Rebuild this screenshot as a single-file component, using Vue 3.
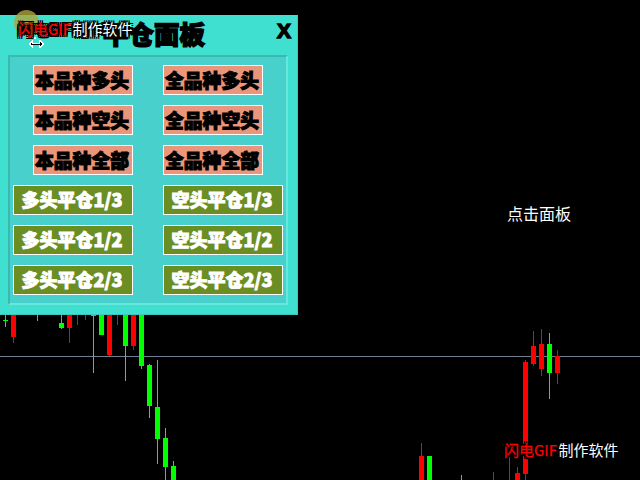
<script setup>
const G = '#00ff00'
const R = '#ff0000'
// x, wickTop, wickBottom, bodyTop, bodyBottom, colour
const candles = [
  [5, 315, 327, 320, 321, G],
  [13, 315, 343, 315, 337, R],
  [37, 315, 321, 0, 0, G],
  [61, 315, 329, 323, 328, G],
  [69, 315, 343, 315, 328, R],
  [77, 315, 325, 0, 0, R],
  [85, 315, 320, 0, 0, R],
  [93, 315, 373, 315, 316, G],
  [101, 315, 335, 315, 335, G],
  [109, 315, 356, 315, 355, R],
  [117, 315, 325, 0, 0, R],
  [125, 315, 381, 315, 346, G],
  [133, 315, 350, 315, 346, R],
  [141, 315, 369, 315, 366, G],
  [149, 364, 418, 365, 406, G],
  [157, 360, 464, 407, 439, G],
  [165, 428, 480, 438, 467, G],
  [173, 461, 480, 466, 480, G],
  [421, 443, 480, 456, 480, R],
  [429, 456, 480, 456, 480, G],
  [461, 475, 480, 0, 0, G],
  [493, 472, 480, 0, 0, R],
  [509, 457, 480, 0, 0, R],
  [517, 467, 480, 473, 480, R],
  [525, 360, 480, 362, 474, R],
  [533, 331, 366, 346, 364, R],
  [541, 329, 376, 344, 369, R],
  [549, 333, 399, 344, 373, G],
  [557, 350, 384, 356, 373, R]
]
const rows = [
  [{ t: '本品种多头', k: 'sm' }, { t: '全品种多头', k: 'sm' }],
  [{ t: '本品种空头', k: 'sm' }, { t: '全品种空头', k: 'sm' }],
  [{ t: '本品种全部', k: 'sm' }, { t: '全品种全部', k: 'sm' }],
  [{ t: '多头平仓1/3', k: 'lg' }, { t: '空头平仓1/3', k: 'lg' }],
  [{ t: '多头平仓1/2', k: 'lg' }, { t: '空头平仓1/2', k: 'lg' }],
  [{ t: '多头平仓2/3', k: 'lg' }, { t: '空头平仓2/3', k: 'lg' }]
]
const buttons = rows.flat()
</script>

<template>
  <div class="stage">
    <svg class="chart" width="640" height="480" viewBox="0 0 640 480" shape-rendering="crispEdges">
      <line x1="0" y1="356.5" x2="640" y2="356.5" stroke="#708090" />
      <g v-for="(c, i) in candles" :key="i">
        <rect :x="c[0]" :y="c[1]" width="1" :height="c[2] - c[1]" :fill="c[5]" />
        <rect v-if="c[4] > c[3]" :x="c[0] - 2" :y="c[3]" width="5" :height="c[4] - c[3]" :fill="c[5]" />
      </g>
    </svg>

    <section class="panel">
      <header class="head">
        <h1 class="title">平仓面板</h1>
        <span class="close">X</span>
      </header>
      <div class="box">
        <button v-for="(b, i) in buttons" :key="i" class="btn" :class="b.k">{{ b.t }}</button>
      </div>
    </section>

    <span class="hint">点击面板</span>

    <div class="pointer">
      <span class="halo"></span>
      <svg class="cursor" width="16" height="12" viewBox="0 0 16 12" shape-rendering="crispEdges">
        <rect x="6" y="0" width="2" height="2" fill="#fff" />
        <path d="M0 7 L4 3 L5 3 L5 6 L11 6 L11 3 L12 3 L16 7 L12 11 L11 11 L11 8 L5 8 L5 11 L4 11 Z" fill="#fff" />
        <path d="M2 7 L4 5 L4 7 L12 7 L12 5 L14 7 L12 9 L12 7.5 L4 7.5 L4 9 Z" fill="#000" />
      </svg>
    </div>

    <div class="mark mark-top"><span class="red">闪电GIF</span> 制作软件</div>
    <div class="mark mark-bottom"><span class="red">闪电GIF</span> 制作软件</div>
  </div>
</template>

<style>
html, body { background: #000; }
</style>

<style scoped>
.stage {
  position: relative;
  width: 640px;
  height: 480px;
  overflow: hidden;
  background: #000;
  font-family: "Noto Sans CJK SC", "Liberation Sans", sans-serif;
}
.chart {
  position: absolute;
  left: 0;
  top: 0;
}
.panel {
  position: absolute;
  left: 0;
  top: 15px;
  width: 298px;
  height: 300px;
  box-sizing: border-box;
  background: #40e0d0;
  border: 1px solid #3cc8bc;
  border-left-color: #40e0d0;
  border-top-color: #40e0d0;
  padding: 0 9px 9px 7px;
  display: flex;
  flex-direction: column;
}
.head {
  height: 39px;
  flex: none;
  position: relative;
  display: flex;
  align-items: center;
  justify-content: center;
}
.title {
  margin: 0 0 6px 12px;
  font-size: 25.5px;
  font-weight: 900;
  line-height: 32px;
  color: #000;
  -webkit-text-stroke: 1.4px #000;
}
.close {
  position: absolute;
  right: -3px;
  top: 0;
  font-family: "Liberation Sans", sans-serif;
  font-weight: 700;
  font-size: 21px;
  line-height: 30px;
  color: #000;
  -webkit-text-stroke: 1.4px #000;
}
.box {
  flex: 1;
  box-sizing: border-box;
  background: #48d1cc;
  border: 2px solid #3cb8b0;
  border-right-color: #66e8dc;
  border-bottom-color: #66e8dc;
  padding: 8px 3px 0;
  display: grid;
  grid-template-columns: 120px 120px;
  grid-auto-rows: 30px;
  column-gap: 30px;
  row-gap: 10px;
  align-content: start;
}
.btn {
  margin: 0;
  padding: 0 2px 1px 0;
  box-sizing: border-box;
  height: 30px;
  border: 1px solid #fff;
  font-family: inherit;
  font-weight: 900;
  line-height: 27px;
  white-space: nowrap;
  overflow: hidden;
}
.sm {
  width: 100px;
  font-size: 18.8px;
  background: #e9967a;
  color: #000;
  -webkit-text-stroke: 1px #000;
}
.sm:nth-child(odd) { justify-self: end; }
.sm:nth-child(even) { justify-self: start; }
.lg {
  width: 120px;
  font-size: 18px;
  background: #6b8e23;
  color: #fff;
  -webkit-text-stroke: 0.9px #fff;
}
.hint {
  position: absolute;
  left: 507px;
  top: 202px;
  font-size: 16px;
  line-height: 22px;
  color: #fff;
}
.pointer {
  position: absolute;
  left: 14px;
  top: 10px;
  width: 30px;
  height: 40px;
}
.halo {
  position: absolute;
  left: 0;
  top: 0;
  width: 25px;
  height: 25px;
  border-radius: 50%;
  background: rgba(172, 165, 60, 0.8);
}
.cursor {
  position: absolute;
  left: 14px;
  top: 27px;
}
.mark {
  position: absolute;
  font-size: 15px;
  line-height: 20px;
  color: #fff;
  white-space: nowrap;
  word-spacing: -2px;
  text-shadow:
    -2px -2px 0 #000, 0 -2px 0 #000, 2px -2px 0 #000,
    -2px 0 0 #000, 2px 0 0 #000,
    -2px 2px 0 #000, 0 2px 0 #000, 2px 2px 0 #000;
}
.red {
  color: #ff0000;
  -webkit-text-stroke: 0.25px #ff0000;
}
.mark-top {
  left: 18px;
  top: 19px;
}
.mark-bottom {
  left: 504px;
  top: 440px;
}
</style>
